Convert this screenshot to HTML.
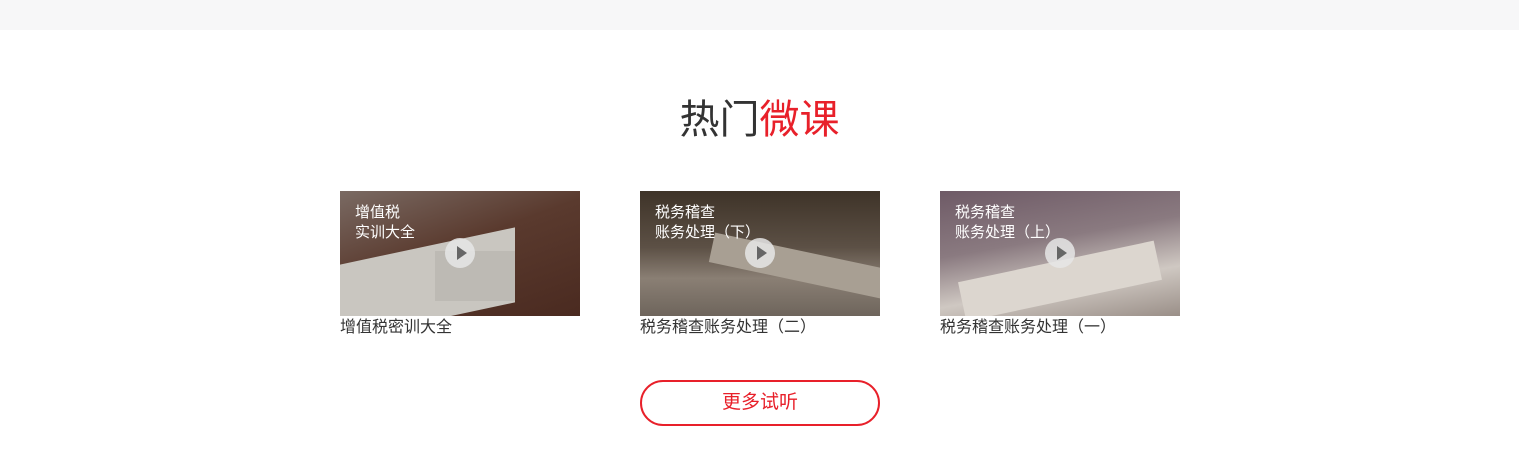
<!DOCTYPE html>
<html><head><meta charset="utf-8"><style>
body{margin:0;width:1519px;height:455px;background:#fff;font-family:"Liberation Sans","Noto Sans CJK SC",sans-serif;position:relative;overflow:hidden}
.top{position:absolute;left:0;top:0;width:1519px;height:30px;background:#f7f7f8}
h1{position:absolute;left:0;width:1519px;top:92px;margin:0;text-align:center;font-size:40px;font-weight:normal;color:#333;line-height:56px}
h1 span{color:#e8202a}
.card{position:absolute;top:191px;width:240px}
.img{width:240px;height:125px;position:relative;overflow:hidden}
.t{position:absolute;left:15px;top:12px;color:#fff;font-size:15px;line-height:20px}
.play{position:absolute;left:105px;top:47px;width:30px;height:30px;border-radius:50%;background:rgba(230,230,230,.85)}
.play:after{content:"";position:absolute;left:12px;top:8px;border-left:10px solid #666;border-top:7px solid transparent;border-bottom:7px solid transparent}
.cap{font-size:16px;color:#333;line-height:22px;margin-top:1px}
.btn{position:absolute;left:640px;top:380px;width:236px;height:42px;border:2px solid #e8202a;border-radius:24px;color:#e8202a;font-size:19px;text-align:center;line-height:42px}
</style></head><body>
<div class="top"></div>
<h1>热门<span>微课</span></h1>
<div class="card" style="left:340px"><div class="img" style="background:linear-gradient(160deg,#7a6a63 0%,#5a3a2e 45%,#4a2a20 100%)">
<div style="position:absolute;left:0;top:55px;width:175px;height:75px;background:#c9c6c0;transform:skewY(-12deg)"></div>
<div style="position:absolute;left:95px;top:60px;width:80px;height:50px;background:#bdbab4"></div>
<div class="t">增值税<br>实训大全</div><div class="play"></div></div><div class="cap">增值税密训大全</div></div>
<div class="card" style="left:640px"><div class="img" style="background:linear-gradient(180deg,#3e3328 0%,#5c5045 45%,#8a7f74 70%,#6e655c 100%)">
<div style="position:absolute;left:70px;top:60px;width:180px;height:30px;background:#a89f93;transform:rotate(12deg)"></div>
<div class="t">税务稽查<br>账务处理（下）</div><div class="play"></div></div><div class="cap">税务稽查账务处理（二）</div></div>
<div class="card" style="left:940px"><div class="img" style="background:linear-gradient(170deg,#6e5a66 0%,#8a7a80 40%,#cfc8c2 70%,#9a8f88 100%)">
<div style="position:absolute;left:20px;top:70px;width:200px;height:40px;background:#dcd6cf;transform:rotate(-12deg)"></div>
<div class="t">税务稽查<br>账务处理（上）</div><div class="play"></div></div><div class="cap">税务稽查账务处理（一）</div></div>
<div class="btn">更多试听</div>
</body></html>
